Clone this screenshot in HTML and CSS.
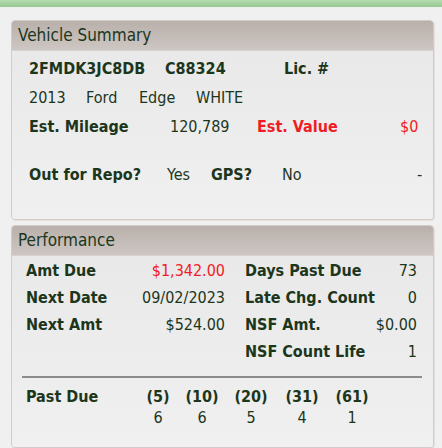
FILE: index.html
```html
<!DOCTYPE html>
<html lang="en">
<head>
    <meta charset="UTF-8">
    <meta name="viewport" content="width=device-width, initial-scale=1.0">
    <title>Account Summary</title>
    <link rel="stylesheet" href="styles.css">
</head>
<body>
    <div class="topbar"></div>
    <div class="page">
        <div class="panel vehicle">
            <div class="panel-head">Vehicle Summary</div>
            <div class="panel-body">
                <div class="row r-vin">
                    <span class="b">2FMDK3JC8DB</span>
                    <span class="b">C88324</span>
                    <span class="b">Lic. #</span>
                </div>
                <div class="row r-car">
                    <span>2013</span>
                    <span>Ford</span>
                    <span>Edge</span>
                    <span>WHITE</span>
                </div>
                <div class="row r-value">
                    <span class="b">Est. Mileage</span>
                    <span>120,789</span>
                    <span class="b red">Est. Value</span>
                    <span class="red">$0</span>
                </div>
                <div class="row r-repo">
                    <span class="b">Out for Repo?</span>
                    <span>Yes</span>
                    <span class="b">GPS?</span>
                    <span>No</span>
                    <span>-</span>
                </div>
            </div>
        </div>

        <div class="panel perf">
            <div class="panel-head">Performance</div>
            <div class="panel-body">
                <div class="perf-grid">
                    <span class="b">Amt Due</span>
                    <span class="num red">$1,342.00</span>
                    <span class="b">Days Past Due</span>
                    <span class="num">73</span>

                    <span class="b">Next Date</span>
                    <span class="num">09/02/2023</span>
                    <span class="b">Late Chg. Count</span>
                    <span class="num">0</span>

                    <span class="b">Next Amt</span>
                    <span class="num">$524.00</span>
                    <span class="b">NSF Amt.</span>
                    <span class="num">$0.00</span>

                    <span></span>
                    <span></span>
                    <span class="b">NSF Count Life</span>
                    <span class="num">1</span>
                </div>
                <hr class="divider">
                <div class="past-due">
                    <span class="b">Past Due</span>
                    <span class="b c">(5)</span>
                    <span class="b c">(10)</span>
                    <span class="b c">(20)</span>
                    <span class="b c">(31)</span>
                    <span class="b c">(61)</span>
                    <span></span>
                    <span class="c">6</span>
                    <span class="c">6</span>
                    <span class="c">5</span>
                    <span class="c">4</span>
                    <span class="c">1</span>
                </div>
            </div>
        </div>
    </div>
</body>
</html>
```

FILE: styles.css
```css
body {
    margin: 0;
    background-color: #f0f0f0;
    font-family: "DejaVu Sans Condensed", "DejaVu Sans", sans-serif;
    font-size: 16px;
    color: #1c361c;
}
.topbar {
    height: 7px;
    background: linear-gradient(#b4dcb0, #98c894);
}
.page {
    padding: 13px 8px 0 11px;
    display: flex;
    flex-direction: column;
    gap: 5px;
}
.panel {
    border: 1px solid #d2cbc7;
    border-radius: 4px;
    background-color: #ececec;
    overflow: hidden;
    box-shadow: 1px 1px 0 #e4dfdc;
}
.panel-head {
    height: 29px;
    line-height: 29px;
    padding-left: 6px;
    font-size: 17px;
    background: linear-gradient(#b9b0ab, #cdc6c2);
    border-bottom: 1px solid #d8d2ce;
}
.panel-body {
    background: linear-gradient(#e9e9e9, #f0f0f0);
}
.b {
    font-weight: 700;
}
.red {
    color: #f01c24;
}

/* vehicle summary */
.vehicle .panel-body {
    padding: 3px 0 30px 17px;
}
.row {
    display: grid;
    height: 29px;
    line-height: 29px;
    white-space: nowrap;
}
.r-vin {
    grid-template-columns: 136px 119px auto;
}
.r-car {
    grid-template-columns: 57px 53px 57px auto;
}
.r-value {
    grid-template-columns: 141px 87px 143px auto;
}
.r-repo {
    margin-top: 19px;
    grid-template-columns: 138px 44px 71px 135px auto;
}

/* performance */
.perf .panel-body {
    padding: 1px 15px 19px 14px;
}
.perf-grid {
    display: grid;
    grid-template-columns: 110px 89px 20px 120px 52px;
    grid-auto-rows: 27px;
    line-height: 27px;
    white-space: nowrap;
}
.perf-grid > span:nth-child(4n+3) {
    grid-column: 4;
}
.num {
    text-align: right;
}
.divider {
    border: none;
    border-top: 2px solid #8c8c8c;
    margin: 11px 0 8px -4px;
    width: 400px;
}
.past-due {
    display: grid;
    grid-template-columns: 110px 44px 44px 54px 48px 52px;
    grid-auto-rows: 21px;
    line-height: 21px;
}
.c {
    text-align: center;
}
```
